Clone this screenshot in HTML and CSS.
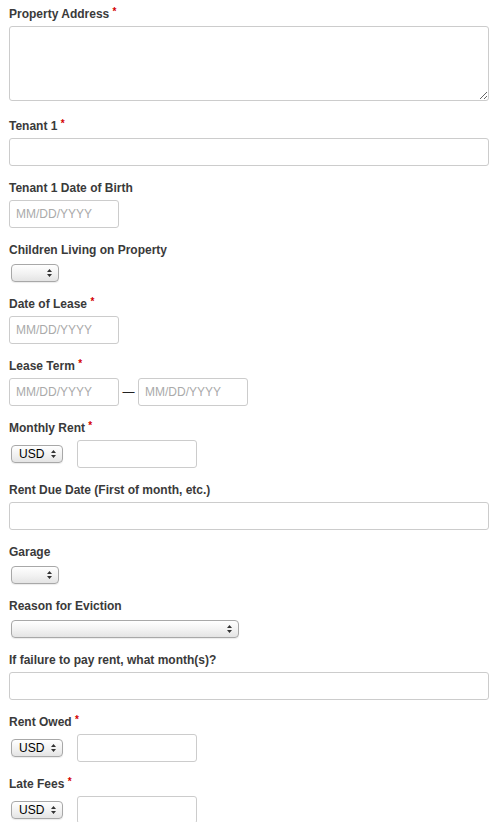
FILE: index.html
```html
<!DOCTYPE html>
<html>
<head>
  <title>Eviction Notice</title>
  <link rel="stylesheet" href="styles.css">
</head>
<body>
  <form class="form">
    <div class="field field-area">
      <label>Property Address <span class="req">*</span></label>
      <textarea class="text full" rows="4"></textarea>
    </div>

    <div class="field">
      <label>Tenant 1 <span class="req">*</span></label>
      <input class="text full" type="text">
    </div>

    <div class="field">
      <label>Tenant 1 Date of Birth</label>
      <input class="text date" type="text" placeholder="MM/DD/YYYY">
    </div>

    <div class="field field-select">
      <label>Children Living on Property</label>
      <span class="select small">
        <select><option></option><option>Yes</option><option>No</option></select>
        <svg class="arrows" width="5" height="8" viewBox="0 0 5 8"><path d="M2.5 0 L5 3 L0 3 Z M0 5 L5 5 L2.5 8 Z"/></svg>
      </span>
    </div>

    <div class="field">
      <label>Date of Lease <span class="req">*</span></label>
      <input class="text date" type="text" placeholder="MM/DD/YYYY">
    </div>

    <div class="field">
      <label>Lease Term <span class="req">*</span></label>
      <div class="row">
        <input class="text date" type="text" placeholder="MM/DD/YYYY">
        <span class="dash">&mdash;</span>
        <input class="text date" type="text" placeholder="MM/DD/YYYY">
      </div>
    </div>

    <div class="field">
      <label>Monthly Rent <span class="req">*</span></label>
      <div class="row money">
        <span class="select currency">
          <select><option>USD</option></select>
          <svg class="arrows" width="5" height="8" viewBox="0 0 5 8"><path d="M2.5 0 L5 3 L0 3 Z M0 5 L5 5 L2.5 8 Z"/></svg>
        </span>
        <input class="text amount" type="text">
      </div>
    </div>

    <div class="field">
      <label>Rent Due Date (First of month, etc.)</label>
      <input class="text full" type="text">
    </div>

    <div class="field field-select">
      <label>Garage</label>
      <span class="select small">
        <select><option></option><option>Yes</option><option>No</option></select>
        <svg class="arrows" width="5" height="8" viewBox="0 0 5 8"><path d="M2.5 0 L5 3 L0 3 Z M0 5 L5 5 L2.5 8 Z"/></svg>
      </span>
    </div>

    <div class="field field-select">
      <label>Reason for Eviction</label>
      <span class="select wide">
        <select><option></option></select>
        <svg class="arrows" width="5" height="8" viewBox="0 0 5 8"><path d="M2.5 0 L5 3 L0 3 Z M0 5 L5 5 L2.5 8 Z"/></svg>
      </span>
    </div>

    <div class="field">
      <label>If failure to pay rent, what month(s)?</label>
      <input class="text full" type="text">
    </div>

    <div class="field">
      <label>Rent Owed <span class="req">*</span></label>
      <div class="row money">
        <span class="select currency">
          <select><option>USD</option></select>
          <svg class="arrows" width="5" height="8" viewBox="0 0 5 8"><path d="M2.5 0 L5 3 L0 3 Z M0 5 L5 5 L2.5 8 Z"/></svg>
        </span>
        <input class="text amount" type="text">
      </div>
    </div>

    <div class="field">
      <label>Late Fees <span class="req">*</span></label>
      <div class="row money">
        <span class="select currency">
          <select><option>USD</option></select>
          <svg class="arrows" width="5" height="8" viewBox="0 0 5 8"><path d="M2.5 0 L5 3 L0 3 Z M0 5 L5 5 L2.5 8 Z"/></svg>
        </span>
        <input class="text amount" type="text">
      </div>
    </div>
  </form>
</body>
</html>
```

FILE: styles.css
```css
body {
  margin: 0;
  padding: 6px 14px 0 9px;
  background-color: white;
  font-family: "Liberation Sans", Arial, sans-serif;
  font-size: 12px;
  color: #333333;
}

.form {
  width: 480px;
}

.field {
  margin-bottom: 14px;
}

.field-area {
  margin-bottom: 17px;
}

.field label {
  display: block;
  font-weight: bold;
  line-height: 16px;
  margin-bottom: 4px;
  color: #3a3a3a;
}

.field-select label {
  margin-bottom: 6px;
}

.req {
  color: #d40000;
  font-size: 10px;
  vertical-align: top;
  line-height: 12px;
}

.text {
  display: block;
  box-sizing: border-box;
  height: 28px;
  margin: 0;
  padding: 0 6px;
  border: 1px solid #cccccc;
  border-radius: 3px;
  background-color: white;
  font-family: "Liberation Sans", Arial, sans-serif;
  font-size: 12px;
  color: #333333;
  outline: none;
}

.text::placeholder {
  color: #aaaaaa;
}

textarea.text {
  height: 75px;
  resize: vertical;
  padding: 5px 6px;
}

.full {
  width: 480px;
}

.date {
  width: 110px;
}

.amount {
  width: 120px;
}

.row {
  display: flex;
  align-items: center;
}

.dash {
  width: 19px;
  text-align: center;
  font-size: 12px;
  color: #222222;
}

.money {
  gap: 12px;
}

/* mac style popup buttons */
.select {
  position: relative;
  display: block;
  width: max-content;
  margin: 0 2px;
}

.select select {
  -webkit-appearance: none;
  appearance: none;
  display: block;
  box-sizing: border-box;
  height: 18px;
  margin: 0;
  padding: 0 0 0 7px;
  border: 1px solid #a8a8a8;
  border-radius: 4px;
  background: linear-gradient(#ffffff, #f0f0f0 60%, #e4e4e4);
  box-shadow: 0 1px 1px rgba(0, 0, 0, 0.08);
  font-family: "Liberation Sans", Arial, sans-serif;
  font-size: 12px;
  color: #000000;
  outline: none;
}

.select .arrows {
  position: absolute;
  right: 7px;
  top: 5px;
  fill: #333333;
  pointer-events: none;
}

.small select {
  width: 48px;
}

.currency select {
  width: 52px;
}

.wide select {
  width: 228px;
}
```
